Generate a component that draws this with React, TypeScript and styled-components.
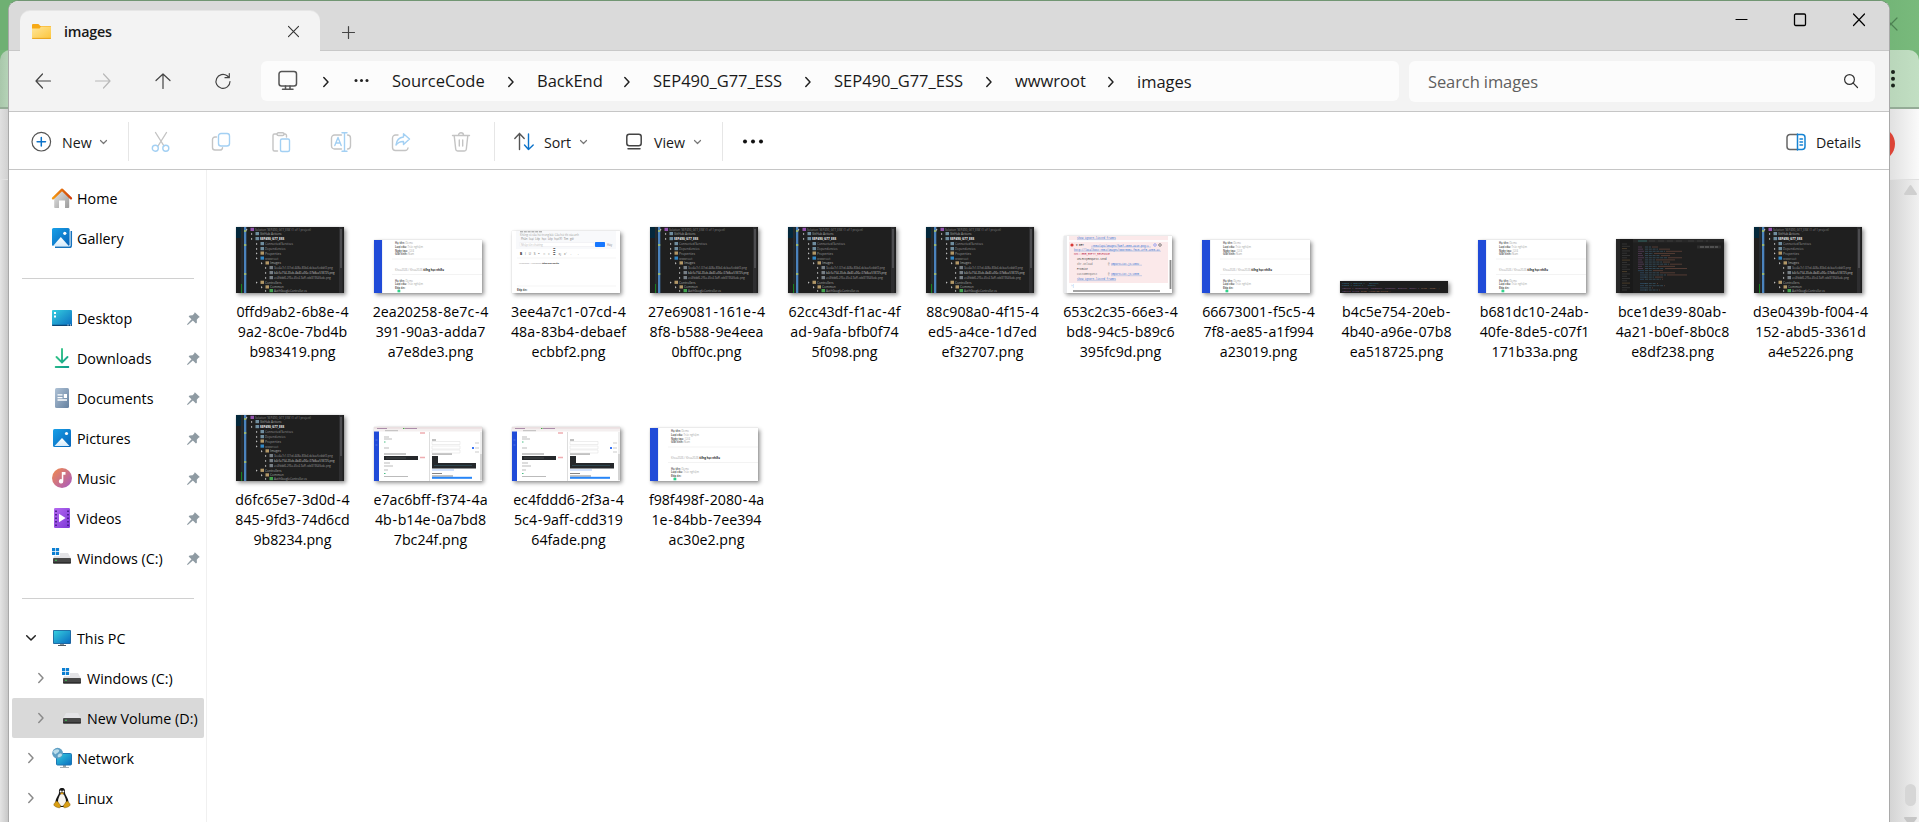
import React from "react";
import styled, { createGlobalStyle } from "styled-components";

const Global = createGlobalStyle`
  * { box-sizing: border-box; }
  html, body, #root { height: 100%; margin: 0; }
  body { overflow: hidden; font-family: "Open Sans", "Noto Sans", sans-serif; color: #191919; }
  svg { display: block; flex: none; overflow: visible; }
`;

/* ---------- browser behind the window ---------- */
const Desktop = styled.div`
  position: relative;
  height: 822px;
  display: grid;
  grid-template-rows: 50px 59px 71px 1fr;
  background: #fdfdfd;
  overflow: hidden;
`;
const TitleStrip = styled.div`
  background: linear-gradient(90deg, #6fb073 0, #6fb073 9px, #72b476 1880px, #79ba7c 100%);
  display: flex;
  justify-content: flex-end;
  padding: 17px 21px 0 0;
`;
const AddressStrip = styled.div`
  background: #72b476;
  > div {
    height: 59px;
    border-radius: 10px 10px 0 0;
    border-bottom: 2px solid #94ab96;
    background: linear-gradient(90deg, #a9c7ab 0, #b6d4b8 9px, #b9d6ba 1889px, #c2dfc3 100%);
    display: flex;
    justify-content: flex-end;
    padding: 19px 24px 0 0;
  }
`;
const BookmarkStrip = styled.div`
  border-bottom: 1px solid #e0e0e0;
  background: linear-gradient(90deg, #e0e0e0 0, #cfcfcf 9px, #e0e0e0 1889px, #fafafa 100%);
  display: flex;
  justify-content: flex-end;
  padding: 18px 24px 0 0;
`;
const Avatar = styled.div`
  width: 34px;
  height: 34px;
  border-radius: 50%;
  background: #dc4437;
`;
const PageStrip = styled.div`
  background: linear-gradient(90deg, #e4e4e4 0, #c4c4c4 9px, #d3d3d3 1889px, #f1f1f1 100%);
  display: flex;
  flex-direction: column;
  align-items: flex-end;
  justify-content: space-between;
  padding: 5px 2px 1px 0;
`;
const ScrollEnd = styled.div`
  width: 13px;
  display: flex;
  flex-direction: column;
  align-items: center;
  gap: 10px;
`;
const ScrollThumb = styled.div`
  width: 11px;
  height: 22px;
  border-radius: 6px;
  background: #d6d6d6;
`;

/* ---------- explorer window ---------- */
const Window = styled.div`
  position: absolute;
  left: 8px;
  top: 0;
  width: 1882px;
  height: 830px;
  border: 1px solid #a9a9a9;
  border-top-color: #719673;
  border-radius: 10px 10px 0 0;
  overflow: hidden;
  background: #fff;
  display: flex;
  flex-direction: column;
`;
const TitleBar = styled.div`
  height: 50px;
  background: #dadada;
  box-shadow: inset 0 -1px #c8c8c8;
  display: flex;
  align-items: flex-end;
  padding-left: 11px;
  flex: none;
`;
const Tab = styled.div`
  width: 300px;
  height: 40px;
  background: #f3f3f3;
  border-radius: 10px 10px 0 0;
  box-shadow: 0 -1px #e6e6e6;
  display: flex;
  align-items: center;
  padding: 0 21px 0 12px;
  font-size: 14.3px;
  font-weight: 600;
  letter-spacing: -0.2px;
  svg:last-child { margin-left: auto; }
  svg:first-child { margin-right: 13px; }
`;
const NewTab = styled.div`
  height: 40px;
  display: flex;
  align-items: center;
  padding: 2px 0 0 22px;
`;
const Controls = styled.div`
  margin-left: auto;
  height: 49px;
  display: flex;
  align-items: flex-start;
  padding: 10px 22px 0 0;
  gap: 43px;
`;
const NavBar = styled.div`
  height: 61px;
  flex: none;
  background: #f3f3f3;
  border-bottom: 1px solid #c6c6c6;
  display: flex;
  align-items: center;
  padding: 0 14px 0 24px;
`;
const NavButton = styled.div`
  width: 20px;
  margin-right: 40px;
  display: flex;
  justify-content: center;
`;
const AddressBox = styled.div`
  width: 1138px;
  height: 40px;
  margin-right: 10px;
  margin-left: -12px;
  border-radius: 6px;
  background: #fcfcfc;
  display: flex;
  align-items: center;
  padding-left: 17px;
  font-size: 16.5px;
`;
const Sep = styled.div<{ $w?: number }>`
  width: ${(p) => p.$w ?? 52}px;
  display: flex;
  justify-content: center;
  padding-top: 1px;
`;
const Crumb = styled.div<{ $w: number; $down?: boolean }>`
  width: ${(p) => p.$w}px;
  white-space: nowrap;
  padding-bottom: ${(p) => (p.$down ? 0 : 2)}px;
`;
const SearchBox = styled.div`
  flex: 1;
  height: 41px;
  border-radius: 6px;
  background: #fcfcfc;
  display: flex;
  align-items: center;
  justify-content: space-between;
  padding: 0 17px 0 19px;
  font-size: 16.5px;
  letter-spacing: -0.1px;
  color: #5f5f5f;
`;
const Toolbar = styled.div`
  height: 58px;
  flex: none;
  border-bottom: 1px solid #c6c6c6;
  display: flex;
  align-items: center;
  padding: 2px 28px 0 22px;
  font-size: 14.2px;
`;
const ToolIcon = styled.div<{ $w?: number; $lead?: number }>`
  width: ${(p) => p.$w ?? 60}px;
  padding-left: ${(p) => p.$lead ?? 0}px;
  display: flex;
  justify-content: center;
`;
const ToolText = styled.div<{ $w: number }>`
  width: ${(p) => p.$w}px;
  white-space: nowrap;
  padding-top: 1px;
`;
const Divider = styled.div`
  width: 1px;
  height: 39px;
  background: #e6e6e6;
`;
const Spacer = styled.div`
  flex: 1;
`;
const Body = styled.div`
  flex: 1;
  display: flex;
`;
const Sidebar = styled.div`
  width: 198px;
  border-right: 1px solid #f0f0f0;
  padding: 8px 2px 0 3px;
`;
const NavRow = styled.div<{ $child?: boolean; $selected?: boolean }>`
  height: 40px;
  border-radius: 2px;
  background: ${(p) => (p.$selected ? "#d9d9d9" : "transparent")};
  display: flex;
  align-items: center;
  padding-left: ${(p) => (p.$child ? 20 : 10)}px;
  font-size: 14.3px;
  color: #000;
`;
const Chevron = styled.div`
  width: 18px;
  display: flex;
  justify-content: center;
`;
const RowIcon = styled.div`
  width: 20px;
  margin-left: 12px;
  margin-right: 5px;
  display: flex;
  justify-content: center;
`;
const RowText = styled.div`
  white-space: nowrap;
  padding-top: 1px;
`;
const PinSlot = styled.div`
  margin-left: auto;
  padding-right: 4px;
`;
const RuleRow = styled.div`
  height: 40px;
  padding: 20px 10px 0;
  > div { height: 1px; background: #d0d0d0; }
`;
const Files = styled.div`
  flex: 1;
  display: grid;
  grid-template-columns: repeat(12, 138px);
  grid-auto-rows: 188px;
  align-content: start;
  padding: 39px 0 0 17px;
`;
const File = styled.div`
  display: flex;
  flex-direction: column;
`;
const ThumbSlot = styled.div`
  height: 84px;
  padding-left: 12px;
  display: flex;
  align-items: flex-end;
`;
const Thumb = styled.div<{ $h: number }>`
  width: 108px;
  height: ${(p) => p.$h}px;
  overflow: hidden;
  background: #fff;
  box-shadow: 2px 2px 4px rgba(0, 0, 0, 0.42), 0 0 1px rgba(0, 0, 0, 0.2);
  svg { overflow: hidden; }
`;
const Name = styled.div`
  padding-top: 9px;
  text-align: center;
  font-size: 14.2px;
  line-height: 20px;
  color: #000;
  margin-left: -1px;
`;
const NameLine = styled.div`
  white-space: nowrap;
`;
const Hyphen = styled.span`
  padding: 0 0.7px;
`;

/* ---------- icons ---------- */
type IconProps = { w: number; h?: number; vb?: string; c?: string; sw?: number; children: React.ReactNode };
const Line = ({ w, h, vb, c = "#333", sw = 1.2, children }: IconProps) => (
  <svg width={w} height={h ?? w} viewBox={vb ?? `0 0 ${w} ${h ?? w}`} fill="none" stroke={c} strokeWidth={sw} strokeLinecap="round" strokeLinejoin="round">
    {children}
  </svg>
);
const Right = ({ c = "#222", s = 1.5 }: { c?: string; s?: number }) => (
  <Line w={6} h={10} c={c} sw={s}><path d="M.8 .6 5 5 .8 9.4" /></Line>
);
const Down = () => <Line w={7} h={4} c="#777" sw={1.2}><path d="M.5 .5 3.5 3.5 6.5 .5" /></Line>;
const Cross = ({ s = 12, c = "#333", sw = 1.2 }: { s?: number; c?: string; sw?: number }) => (
  <Line w={s} vb="0 0 12 12" c={c} sw={sw}><path d="M.5 .5 11.5 11.5M11.5 .5 .5 11.5" /></Line>
);
const G = "#c4c4c4";
const B = "#a3d0f3";

const GradientSheet = styled.svg`
  position: absolute;
`;
const Defs = () => (
  <GradientSheet width="0" height="0">
    <defs>
      <linearGradient id="folder" x1="0" y1="0" x2="1" y2="1"><stop stopColor="#ffe69a" /><stop offset="1" stopColor="#fcc53a" /></linearGradient>
      <linearGradient id="blue" x1="0" y1="0" x2="1" y2="1"><stop stopColor="#18a0e8" /><stop offset="1" stopColor="#0763b8" /></linearGradient>
      <linearGradient id="cyan" x1="0" y1="0" x2="1" y2="1"><stop stopColor="#35cfdf" /><stop offset="1" stopColor="#0a6cc0" /></linearGradient>
      <linearGradient id="roof" x1="0" x2="1"><stop stopColor="#f59a12" /><stop offset="1" stopColor="#cf3f0b" /></linearGradient>
      <linearGradient id="wall" x1="0" y1="0" x2="1" y2="1"><stop stopColor="#e6e6e6" /><stop offset="1" stopColor="#9b9b9b" /></linearGradient>
      <linearGradient id="doc" x1="0" y1="0" x2="1" y2="1"><stop stopColor="#afc2d6" /><stop offset="1" stopColor="#64809f" /></linearGradient>
      <linearGradient id="music" x1="0" y1="0" x2="1" y2="1"><stop stopColor="#f38b49" /><stop offset="1" stopColor="#a659c4" /></linearGradient>
      <linearGradient id="video" x1="0" y1="0" x2="1" y2="1"><stop stopColor="#b56af0" /><stop offset="1" stopColor="#7b35d6" /></linearGradient>
      <linearGradient id="green" x1="0" y1="0" x2="1" y2="1"><stop stopColor="#3ecf86" /><stop offset="1" stopColor="#0e9c8d" /></linearGradient>
      <linearGradient id="snow" x1="0" y1="0" x2="0" y2="1"><stop stopColor="#fff" /><stop offset="1" stopColor="#d7ecfb" /></linearGradient>
    </defs>
  </GradientSheet>
);

const FolderIcon = () => (
  <svg width="19" height="15" viewBox="0 0 19 15">
    <path d="M0 1.2C0 .5.5 0 1.2 0H6c1 0 1.5 1.6 2.5 2H18c.6 0 1 .4 1 1v4H0z" fill="#f7a915" />
    <path d="M0 4.6h7.6L9 2.6h9c.6 0 1 .4 1 1V14c0 .6-.4 1-1 1H1c-.6 0-1-.4-1-1z" fill="url(#folder)" />
    <path d="M.2 14.4h18.6" stroke="#e8a31e" />
  </svg>
);
const HomeIcon = () => (
  <svg width="20" height="20">
    <path d="M2.2 9.2 9.7 2.200l7.500 7v10a.8.8 0 0 1-.8.8H13v-7.600H7V20H3a.8.8 0 0 1-.8-.8z" fill="url(#wall)" />
    <path d="M1 10.400 10 1.600l9 8.800" fill="none" stroke="url(#roof)" strokeWidth="2.300" strokeLinecap="round" strokeLinejoin="round" />
  </svg>
);
const GalleryIcon = () => (
  <svg width="20" height="20">
    <path d="M19.300 3v14.500a1.800 1.800 0 0 1-1.800 1.800H3" fill="none" stroke="#1672bd" strokeWidth="1.500" />
    <rect width="17.600" height="18" rx="1.500" fill="url(#blue)" />
    <path d="M1 18 8.800 9l8 9z" fill="url(#snow)" /><circle cx="12.800" cy="5.300" r="1.600" fill="#fff" />
  </svg>
);
const PicturesIcon = () => (
  <svg width="18" height="18">
    <rect width="18" height="18" rx="1.500" fill="url(#blue)" />
    <path d="M1.500 17 9 9l7.500 8z" fill="url(#snow)" /><circle cx="13.500" cy="4.500" r="1.600" fill="#fff" />
  </svg>
);
const DesktopIcon = () => (
  <svg width="20" height="16">
    <rect width="20" height="16" rx="1" fill="url(#cyan)" />
    <path d="M0 14.800h20V15a1 1 0 0 1-1 1H1a1 1 0 0 1-1-1z" fill="#0b4474" />
    <path d="M2 2h2v2H2zM2 5.500h2v2H2z" fill="#fff" /><path d="M15.500 15h1M18 15h1" stroke="#fff" />
  </svg>
);
const DownloadsIcon = () => (
  <svg width="16" height="20" fill="none" stroke="url(#green)" strokeWidth="1.900" strokeLinecap="round">
    <path d="M8 .9V14l.01.1M2.500 9 8 14.500 13.500 9M1.700 19h12.600l.01.01" />
  </svg>
);
const DocumentsIcon = () => (
  <svg width="14" height="20">
    <rect width="14" height="20" rx="1.500" fill="url(#doc)" />
    <path d="M2.500 6.800h5M2.500 9.600h5M2.500 12h9.500" stroke="#fff" strokeWidth="1.300" /><rect x="8.800" y="6" width="3.200" height="4" fill="#fff" />
  </svg>
);
const MusicIcon = () => (
  <svg width="20" height="20">
    <circle cx="10" cy="10" r="10" fill="url(#music)" />
    <path d="M9.800 4h3.700v2.700h-2.200v6.500a2.200 2.200 0 1 1-1.500-2z" fill="#fff" />
  </svg>
);
const VideosIcon = () => (
  <svg width="16" height="20">
    <rect width="16" height="20" rx="1.200" fill="url(#video)" />
    <path d="M2 2.500v16M14 2.500v16" stroke="#3d1680" strokeWidth="1.600" strokeDasharray="1.600 1.900" />
    <path d="M5 5.800v8.400L11.600 10z" fill="#fff" />
  </svg>
);
const DriveIcon = ({ win }: { win?: boolean }) => (
  <svg width="20" height="20">
    <path d="M4 5h12l3 5.500H1z" fill="#e3e3e6" />
    <rect x="1" y="10" width="18" height="5.500" rx="1" fill="#474747" />
    <rect x="1" y="14" width="18" height="1.500" rx=".7" fill="#2e2e2e" /><circle cx="4" cy="12.200" r=".8" fill="#42e35a" />
    {win && (<><rect x="-.500" y="-.500" width="8.500" height="8.500" fill="#fff" /><path d="M0 0h3.200v3.200H0zM3.900 0h3.200v3.200H3.900zM0 3.900h3.200v3.200H0zM3.900 3.900h3.200v3.200H3.900z" fill="#0c7fd2" /></>)}
  </svg>
);
const PcIcon = () => (
  <svg width="18" height="18">
    <path d="M7 14h4v2H7z" fill="#8b969c" /><rect y="1" width="18" height="14" rx="1" fill="#21629a" />
    <rect x=".800" y="1.800" width="16.400" height="12.400" fill="url(#cyan)" /><path d="M5 16.500h8" stroke="#505860" />
  </svg>
);
const NetworkIcon = () => (
  <svg width="20" height="20">
    <path d="M11 17h3v2h-3z" fill="#9ca5aa" /><path d="M8 19.500h9" stroke="#a6afb4" />
    <rect x="4.500" y="5.500" width="15" height="11.500" rx="1" fill="url(#cyan)" stroke="#1d76b4" />
    <circle cx="5.600" cy="5.200" r="5.400" fill="#5f9fc4" /><path d="M1 3.500C3 1 6 .500 7 2S5 5 4 6 2 5 1 3.500zM7 6c2-1 3 0 3 1S7 10 6 9 6 6.500 7 6z" fill="#b9dcea" />
  </svg>
);
const LinuxIcon = () => (
  <svg width="18" height="20">
    <path d="M9 0C6.300 0 5.800 2 6 4.500 6 6.800 2.500 10 2.500 14.500c0 3 3 4.500 6.500 4.500s6.500-1.500 6.500-4.500C15.500 10 12 6.800 12 4.500 12.200 2 11.700 0 9 0z" fill="#171717" />
    <path d="M9 6C6.800 6 6.500 8 5.500 10.500S5 18 9 18s4.500-5 3.500-7.500S11.200 6 9 6z" fill="#f7f4ee" />
    <circle cx="7.700" cy="3.500" r="1" fill="#fff" /><circle cx="10.300" cy="3.500" r="1" fill="#fff" />
    <path d="M7 5.200 9 4.200l2 1-2 1.400z" fill="#e2a116" />
    <path d="M3.500 13C2.500 14.500.5 15.500.8 17s4 2.800 5.500 2.800S8 18 6.800 16.500 4.500 13 3.500 13zM14.500 13c1 1.500 3 2.500 2.700 4s-4 2.800-5.500 2.800S10 18 11.200 16.500s2.300-3.500 3.300-3.500z" fill="#d99e14" stroke="#6c4c05" strokeWidth=".4" />
  </svg>
);
const PinIcon = () => (
  <svg width="13" height="13" viewBox="0 0 13 13">
    <path d="M7.800.2 12.800 5l-1.600 1-1.400 1.700.1 3-1 .8-3-3L1 12.700l-.9.200.2-.9L4.500 7.200 1.600 4.400l1-1 3-.1 1.500-1.500z" fill="#8f9ba3" />
  </svg>
);

/* ---------- file previews ---------- */
const treeRows: [number, number, number, string, string][] = [
  [19, 3.8, 2.9, "Solution 'SEP490_G77_ESS' (1 of 1 project)", "#858585"],
  [24, 8, 3.1, "GitHub Actions", "#a8a8a8"],
  [24, 13, 3.1, "SEP490_G77_ESS", "#f0f0f0"],
  [29, 18, 3.1, "Connected Services", "#9a9a9a"],
  [29, 23, 3.1, "Dependencies", "#929292"],
  [29, 27.5, 3.3, "Properties", "#9a9a9a"],
  [29, 32.5, 3.1, "wwwroot", "#858585"],
  [34, 37.3, 3.3, "Images", "#b0b0b0"],
  [38, 42, 2.8, "3ee4a7c1-07cd-448a-83b4-debaefecbbf2.png", "#9a9a9a"],
  [38, 47, 2.8, "b4c5e754-20eb-4b40-a96e-07b8ea518725.png", "#c8c8c8"],
  [38, 52, 2.8, "ec4fddd6-2f3a-45c4-9aff-cdd31964fade.png", "#9a9a9a"],
  [29, 56.7, 3.2, "Controllers", "#a8a8a8"],
  [34, 61.3, 3.2, "Common", "#a0a0a0"],
  [38, 65, 2.9, "AuthGoogleController.cs", "#a0a0a0"],
];
const treeIcon = (i: number) => {
  if (i === 0) return "#9352ad";
  if (i < 5) return "#6f8d9e";
  if (i === 6) return "#3186c4";
  if (i > 7 && i < 11) return "#777f85";
  return i === 13 ? "#43a24d" : "#b39867";
};
const TreePreview = () => (
  <svg width="108" height="66" fontFamily="Open Sans">
    <rect width="108" height="66" fill="#1f1f1f" />
    <rect width="8" height="11" fill="#04283b" /><rect x="5" width="2.500" height="66" fill="#252a2e" />
    <rect x="8" width="2.300" height="66" fill="#4b83bd" />
    <path d="M8 4h2.300M8 18h2.300M8 47h2.300" stroke="#b0c65f" strokeWidth="1.500" /><path d="M5.500 57v9" stroke="#178020" />
    {treeRows.map(([x, y, size, t, c], i) => (
      <g key={i}>
        <path d={`M${x - 9} ${y - 2.3}l1.600 1.200-1.600 1.200z`} fill="#bbb" />
        <rect x={x - 4.5} y={y - 3} width="3.500" height="3.200" fill={treeIcon(i)} />
        <text x={x} y={y} fontSize={size} fill={c} fontWeight={i === 2 ? 700 : 400}>{t}</text>
      </g>
    ))}
    <rect x="103" width="3.500" height="66" fill="#2e2e30" /><rect x="104" y="2" width="2" height="39" fill="#4d4d50" />
  </svg>
);
const ExamPreview = () => (
  <svg width="108" height="53" fontFamily="Open Sans" fontSize="2.700" fill="#a2a2a2">
    <rect width="108" height="53" fill="#fff" /><rect x="8" width="1" height="53" fill="#f0f2f6" /><rect width="8" height="53" fill="#204bd8" />
    <path d="M18 34.500h91M18 19h91" stroke="#eee" strokeWidth=".7" />
    <g fontSize="2.700">
      <text x="21" y="4.300"><tspan fontWeight="700" fill="#666">Họ tên:</tspan> Demo</text>
      <text x="21" y="8"><tspan fontWeight="700" fill="#666">Loại câu:</tspan> Trắc nghiệm</text>
      <text x="21" y="11.500"><tspan fontWeight="700" fill="#666">Ngày tạo:</tspan> 12/4</text>
      <text x="21" y="15"><tspan fontWeight="700" fill="#666">Giới tính:</tspan> Nam</text>
      <text x="21" y="31">Khoa2026 / Khoa2026 <tspan fontWeight="700" fill="#222">tiếng học nhiều</tspan></text>
      <text x="21" y="41.500"><tspan fontWeight="700" fill="#666">Họ tên:</tspan> Demo</text>
      <text x="21" y="45"><tspan fontWeight="700" fill="#666">Loại câu:</tspan> Trắc nghiệm</text>
      <text x="21" y="48.500"><tspan fontWeight="700" fill="#666">Đáp án:</tspan></text>
    </g>
    <rect x="23.500" y="49.800" width="2.800" height="2.500" fill="#2fd28a" />
  </svg>
);
const EditorPreview = () => (
  <svg width="108" height="62" fontFamily="Open Sans" fontSize="2.700" fill="#999">
    <rect width="108" height="62" fill="#fff" /><rect x="4" width="100" height="18" fill="#f8f9fb" />
    <path d="M8 .8h22" stroke="#999" strokeDasharray="3 .8" />
    <text x="8" y="4.800">Không có câu hỏi trong bài. Câu hỏi thi của anh</text>
    <text x="9" y="9.300" fill="#777" wordSpacing="1">Phân loại  Lớp học  Lớp học(Y)  Tìm giờ</text>
    <rect x="8" y="11.500" width="74" height="4" fill="#fff" stroke="#e5e7eb" strokeWidth=".4" /><text x="9" y="14.600" fill="#bbb">Nhập tên chương</text>
    <rect x="83" y="11" width="10" height="5" rx=".8" fill="#1677ff" /><text x="95" y="15" fill="#777">Hủy</text>
    <text x="8" y="24.300" fontSize="3.200" wordSpacing="2" fill="#666"><tspan fontWeight="700" fill="#222">B</tspan> I U S ❝ ‹› ≡ ≣ x₂ x² ← →</text>
    <path d="M5 27h99M5 55h99" stroke="#eee" strokeWidth=".6" />
    <text x="7" y="32.500" fontSize="2.200">Khoa2026 / Khoa2026 <tspan fontWeight="700" fill="#222">tiếng học nhiều</tspan></text>
    <text x="5" y="59.500" fontWeight="700" fill="#555">Đáp án:</text>
  </svg>
);
const ErrorPreview = () => (
  <svg width="108" height="57" fontFamily="Liberation Mono" fontSize="2.600" fill="#777">
    <rect width="108" height="57" fill="#fff" /><rect width="3" height="57" fill="#e9eaec" /><rect x="5" width="99" height="47" fill="#fbe9ea" />
    <path d="M5 5h99" stroke="#fff" strokeWidth="1.500" />
    <g fill="#3472d5">
      <text x="13" y="3">Show ignore-listed frames</text>
      <text x="27" y="10.500">:7052/api/images/f98f-2080-4a1e.png:1</text>
      <text x="10" y="14.500">http://localhost:7052/images/66673001-f5c5-47f8-ae85-a1</text>
      <text x="47" y="28.500">ImportList.js:2082</text>
      <text x="47" y="39">ImportList.js:2085</text>
      <text x="13" y="44">Show ignore-listed frames</text>
    </g>
    <path d="M13 3.600h39M27 11h60M10 15.200h87M47 29.200h31M47 39.700h31M13 44.600h39" stroke="#7ea2df" strokeWidth=".4" />
    <circle cx="8" cy="9" r="1.600" fill="#d83a36" /><text x="12" y="10.300" fill="#222">▼ GET</text>
    <circle cx="91" cy="9" r="1.300" fill="none" stroke="#7d8df0" strokeWidth=".7" /><circle cx="96" cy="9" r="1.300" fill="none" stroke="#555" strokeWidth=".7" />
    <text x="10" y="18.500" fill="#b35">net::ERR_EMPTY_RESPONSE</text><text x="13" y="23.500" fill="#444">XMLHttpRequest.send</text>
    <text x="13" y="28.500">xhr.onload</text><text x="13" y="33.500" fill="#444">Promise</text><text x="13" y="39">customRequest</text>
    <text x="44" y="28.500">@</text><text x="44" y="39">@</text><text x="7" y="50.500" fill="#3472d5">›|</text>
    <path d="M106.500 24v29" stroke="#8a8a8a" strokeWidth="1.800" /><path d="M9 55h87" stroke="#858585" strokeWidth="1.500" />
  </svg>
);
const SnippetPreview = () => (
  <svg width="108" height="12" fontFamily="Liberation Mono" fontSize="2.400">
    <rect width="108" height="12" fill="#1e1e1e" />
    <text x="2" y="2.500" fill="#36809e">const {"{ Option }"} = Select;</text><text x="2" y="5.200" fill="#36809e">const {"{ Title }"} = Table;</text>
    <text x="2" y="8" fill="#8d5e91">import {"{ useEffect, useState, useMemo, Button, Modal }"} <tspan fill="#a4745b">from 'antd' ;</tspan></text>
    <text x="2" y="10.900" fill="#8d5e91">import axios <tspan fill="#a4745b">from 'routing/axios';</tspan></text>
  </svg>
);
const CodePreview = () => (
  <svg width="108" height="54">
    <rect width="108" height="54" fill="#1f1f1f" /><rect width="4" height="54" fill="#272727" /><rect x="4" width="13" height="54" fill="#1a1a1a" /><rect x="17" width="91" height="3.500" fill="#272727" />
    <path d="M22 2h9" stroke="#3a9390" strokeWidth=".6" /><path d="M33 2h35M72 2h20" stroke="#4b4b4b" strokeWidth=".6" strokeDasharray="6 3" />
    <rect x="81" y="6.500" width="24" height="3" fill="#2f2f2f" /><path d="M84 8h18" stroke="#8c8c8c" strokeWidth=".7" strokeDasharray="4 1" />
    {Array.from({ length: 21 }, (_, i) => (
      <g key={i} strokeWidth=".7">
        <path d={`M6 ${5 + i * 2.3}h${5 + (i * 3) % 6}`} stroke={i % 5 === 2 ? "#6b5537" : "#444"} strokeWidth=".6" />
        {i !== 16 && (
          <>
            <path d={`M${22 + (i > 11 ? 2 : 0)} ${8 + i * 2.15}h${4 + (i % 3)}`} stroke={i < 11 ? "#5e4163" : "#31536f"} />
            <path d={`M29 ${8 + i * 2.15}h${6 + (i * 7) % 19}`} stroke="#39596a" strokeDasharray="3 .8" />
            <path d={`M${36 + (i * 7) % 19} ${8 + i * 2.15}h${i < 15 ? 6 + (i * 5) % 17 : 1}`} stroke="#6b493d" />
          </>
        )}
      </g>
    ))}
  </svg>
);
const AdminPreview = () => (
  <svg width="108" height="54">
    <rect width="108" height="54" fill="#fff" /><rect width="108" height="4.500" fill="#f4efef" /><rect width="108" height="1.800" fill="#ebe0e1" />
    <path d="M3 1.500h10M31 1.500h12" stroke="#979" strokeWidth=".8" /><path d="M29 1.500h1.500" stroke="#4a4" /><path d="M11 3.700h13" stroke="#999" strokeWidth=".6" />
    <rect y="4.500" width="5" height="50" fill="#204bd8" /><path d="M1.500 13h2M1.500 18h2" stroke="#7290ee" strokeWidth=".6" />
    <path d="M55.500 5v49M107 5v49" stroke="#ddd" />
    <path d="M10 10h5M10 12h8M10 21h5M10 36h6M10 39h9M10 43h4M10 49.500h24" stroke="#aaa" strokeWidth=".8" />
    <path d="M10 27h22" stroke="#777" strokeWidth=".8" /><path d="M46 6h5M46 30.500h5" stroke="#eeadb1" strokeWidth="1.500" />
    <rect x="10" y="29" width="34" height="4" fill="#25282b" /><path d="M12 31h20" stroke="#666" strokeWidth=".5" />
    <path d="M10 15h1.500M10 46.500h1.500" stroke="#46bd82" />
    <path d="M58 13h4M58 27h20M58 46.500h10M58 49h21" stroke="#666" strokeWidth=".8" />
    <path d="M58 14.500h28v3H58zM58 19h28v3H58zM58 23h28v3H58z" fill="#fff" stroke="#ddd" strokeWidth=".5" />
    <rect x="98" y="20" width="2" height="2" fill="#3975f6" /><path d="M101 16h4M101 21h4M101 25h4" stroke="#aaa" strokeWidth=".6" />
    <rect x="58" y="29" width="6" height="7" fill="#25282b" /><rect x="58" y="36" width="44" height="5.500" fill="#25282b" /><path d="M60 38.500h38" stroke="#386575" strokeWidth=".5" />
    <path d="M58 43h22" stroke="#83a9ef" strokeWidth=".7" /><rect x="58" y="49.800" width="40" height="2" fill="#2785f7" /><path d="M107 27v26" stroke="#bbb" />
  </svg>
);

const previews = {
  tree: [66, TreePreview], exam: [53, ExamPreview], editor: [62, EditorPreview], error: [57, ErrorPreview],
  snippet: [12, SnippetPreview], code: [54, CodePreview], admin: [54, AdminPreview],
} as const;

const files: [keyof typeof previews, string, string, string][] = [
  ["tree", "0ffd9ab2-6b8e-4", "9a2-8c0e-7bd4b", "b983419.png"],
  ["exam", "2ea20258-8e7c-4", "391-90a3-adda7", "a7e8de3.png"],
  ["editor", "3ee4a7c1-07cd-4", "48a-83b4-debaef", "ecbbf2.png"],
  ["tree", "27e69081-161e-4", "8f8-b588-9e4eea", "0bff0c.png"],
  ["tree", "62cc43df-f1ac-4f", "ad-9afa-bfb0f74", "5f098.png"],
  ["tree", "88c908a0-4f15-4", "ed5-a4ce-1d7ed", "ef32707.png"],
  ["error", "653c2c35-66e3-4", "bd8-94c5-b89c6", "395fc9d.png"],
  ["exam", "66673001-f5c5-4", "7f8-ae85-a1f994", "a23019.png"],
  ["snippet", "b4c5e754-20eb-", "4b40-a96e-07b8", "ea518725.png"],
  ["exam", "b681dc10-24ab-", "40fe-8de5-c07f1", "171b33a.png"],
  ["code", "bce1de39-80ab-", "4a21-b0ef-8b0c8", "e8df238.png"],
  ["tree", "d3e0439b-f004-4", "152-abd5-3361d", "a4e5226.png"],
  ["tree", "d6fc65e7-3d0d-4", "845-9fd3-74d6cd", "9b8234.png"],
  ["admin", "e7ac6bff-f374-4a", "4b-b14e-0a7bd8", "7bc24f.png"],
  ["admin", "ec4fddd6-2f3a-4", "5c4-9aff-cdd319", "64fade.png"],
  ["exam", "f98f498f-2080-4a", "1e-84bb-7ee394", "ac30e2.png"],
];

type Place = { label: string; icon: React.ReactNode; pin?: boolean; open?: boolean; closed?: boolean; child?: boolean; selected?: boolean };
const places: (Place | null)[] = [
  { label: "Home", icon: <HomeIcon /> },
  { label: "Gallery", icon: <GalleryIcon /> },
  null,
  { label: "Desktop", icon: <DesktopIcon />, pin: true },
  { label: "Downloads", icon: <DownloadsIcon />, pin: true },
  { label: "Documents", icon: <DocumentsIcon />, pin: true },
  { label: "Pictures", icon: <PicturesIcon />, pin: true },
  { label: "Music", icon: <MusicIcon />, pin: true },
  { label: "Videos", icon: <VideosIcon />, pin: true },
  { label: "Windows (C:)", icon: <DriveIcon win />, pin: true },
  null,
  { label: "This PC", icon: <PcIcon />, open: true },
  { label: "Windows (C:)", icon: <DriveIcon win />, closed: true, child: true },
  { label: "New Volume (D:)", icon: <DriveIcon />, closed: true, child: true, selected: true },
  { label: "Network", icon: <NetworkIcon />, closed: true },
  { label: "Linux", icon: <LinuxIcon />, closed: true },
];

const crumbs: [string, number][] = [
  ["SourceCode", 93], ["BackEnd", 64], ["SEP490_G77_ESS", 129], ["SEP490_G77_ESS", 129], ["wwwroot", 70], ["images", 56],
];

const FileName = ({ text }: { text: string }) => (
  <NameLine>
    {text.split("-").map((part, i) => (
      <React.Fragment key={i}>{i > 0 && <Hyphen>-</Hyphen>}{part}</React.Fragment>
    ))}
  </NameLine>
);

export default function App() {
  return (
    <Desktop>
      <Global />
      <Defs />
      <TitleStrip><Line w={14} c="#4d8052"><path d="M1 1 13 13M13 1 1 13" /></Line></TitleStrip>
      <AddressStrip><div>
        <svg width="4" height="20" fill="#1b241c"><circle cx="2" cy="3" r="2" /><circle cx="2" cy="9.700" r="2" /><circle cx="2" cy="16.400" r="2" /></svg>
      </div></AddressStrip>
      <BookmarkStrip><Avatar /></BookmarkStrip>
      <PageStrip>
        <ScrollEnd><svg width="13" height="10"><path d="M6.500 1 12 9H1z" fill="#cfcfcf" stroke="#cfcfcf" strokeWidth="2" strokeLinejoin="round" /></svg></ScrollEnd>
        <ScrollEnd><ScrollThumb /><svg width="13" height="5"><path d="M1 2h11L6.500 9z" fill="#c6c6c6" stroke="#c6c6c6" strokeWidth="2" strokeLinejoin="round" /></svg></ScrollEnd>
      </PageStrip>

      <Window>
        <TitleBar>
          <Tab><FolderIcon />images<Cross s={11} /></Tab>
          <NewTab><Line w={13} c="#444"><path d="M6.500 .5v12M.5 6.500h12" /></Line></NewTab>
          <Controls>
            <Line w={16} c="#000"><path d="M3 7.500h11" /></Line>
            <Line w={16} c="#000" sw={1.300}><rect x="2.500" y="2" width="11" height="11.500" rx="1.200" /></Line>
            <Line w={16} c="#000"><path d="M2.500 2l11 11.500M13.500 2l-11 11.500" /></Line>
          </Controls>
        </TitleBar>

        <NavBar>
          <NavButton><Line w={16} c="#444"><path d="M15.500 8H1M7.500 1 1 8l6.500 7" /></Line></NavButton>
          <NavButton><Line w={16} c="#b8b8b8"><path d="M.5 8H15M8.500 1 15 8l-6.500 7" /></Line></NavButton>
          <NavButton><Line w={16} c="#444"><path d="M8 15.500V1M1 7.500 8 1l7 6.500" /></Line></NavButton>
          <NavButton><Line w={16} c="#444"><path d="M15 8.500a7 7 0 1 1-2.800-5.700l1.800 1.700M14.300.5v4.200H10" /></Line></NavButton>
          <AddressBox>
            <Line w={20} c="#555" sw={1.500}><rect x="1" y=".5" width="17.500" height="14.500" rx="2.500" /><path d="M7.500 15v3M12 15v3M4.500 18.300h10.500" /></Line>
            <Sep $w={56}><Right /></Sep>
            <svg width="16" height="4" fill="#222"><circle cx="2" cy="1.500" r="1.500" /><circle cx="7.500" cy="1.500" r="1.500" /><circle cx="13" cy="1.500" r="1.500" /></svg>
            <Sep $w={22} />
            {crumbs.map(([t, w], i) => (
              <React.Fragment key={i}>
                {i > 0 && <Sep><Right /></Sep>}
                <Crumb $w={w} $down={i === 5}>{t}</Crumb>
              </React.Fragment>
            ))}
          </AddressBox>
          <SearchBox>Search images
            <Line w={14} c="#333"><circle cx="5.500" cy="5.500" r="4.900" /><path d="M9.200 9.200 13.500 13.500" /></Line>
          </SearchBox>
        </NavBar>

        <Toolbar>
          <ToolIcon $w={20}><Line w={20} c="#555"><circle cx="10.300" cy="9.700" r="9.300" /><path d="M10.300 5.500v8.400M6.100 9.700h8.400" stroke="#0b72c9" strokeWidth="1.500" /></Line></ToolIcon>
          <Sep $w={11} />
          <ToolText $w={30}>New</ToolText>
          <Sep $w={22}><Down /></Sep>
          <Sep $w={14} />
          <Divider />
          <Sep $w={2} />
          <ToolIcon>
            <Line w={20} c={G} sw={1.400}><path d="M4.500 .5l8.500 13.500M15.500 .5L7 14" /><g stroke={B}><circle cx="4.300" cy="16.200" r="3" /><circle cx="14.800" cy="16.200" r="3" /></g></Line>
          </ToolIcon>
          <ToolIcon><Line w={20} c={G} sw={1.400}><path d="M5.500 5H4a2.500 2.500 0 0 0-2.500 2.500v8A2.500 2.500 0 0 0 4 18h5a2.500 2.500 0 0 0 2.500-2.200" /><rect x="7.500" y="1.500" width="11" height="12.500" rx="2.500" stroke={B} /></Line></ToolIcon>
          <ToolIcon><Line w={20} c={G} sw={1.400}><path d="M6 2H3.500A1.500 1.500 0 0 0 2 3.500v14A1.500 1.500 0 0 0 3.500 19h3M13 2h1a1.500 1.500 0 0 1 1.500 1.500V5" /><rect x="6" y=".8" width="7" height="2.700" rx="1.300" /><rect x="9.500" y="7" width="9" height="12.500" rx="1.500" stroke={B} /></Line></ToolIcon>
          <ToolIcon><Line w={20} c={G} sw={1.400}><path d="M10.500 3H3.500A3 3 0 0 0 .5 6v8a3 3 0 0 0 3 3h7M16.500 3a3 3 0 0 1 3 3v8a3 3 0 0 1-3 3" /><path d="M11 .8h5M13.500 .8v18.500M11 19.300h5M3.800 13.500 7 5.500l3.200 8M5 11h4" stroke={B} /></Line></ToolIcon>
          <ToolIcon><Line w={20} c={G} sw={1.400}><path d="M7 3H4.500a3 3 0 0 0-3 3v9.500a3 3 0 0 0 3 3H14a3 3 0 0 0 3-2.500" /><path d="M12.500 1.800 18.500 7l-6 5.500V9.500C9 9.300 7 10.500 5 13c.5-4.500 3-7.500 7.500-8z" stroke={B} /></Line></ToolIcon>
          <ToolIcon><Line w={20} c={G} sw={1.400}><path d="M1.500 3.500h17M7.500 3.200a2.500 2.500 0 0 1 5 0M3.200 3.700l1.500 13.500a2 2 0 0 0 2 1.800h6.600a2 2 0 0 0 2-1.800l1.500-13.500M8.300 8v6M11.700 8v6" /></Line></ToolIcon>
          <Sep $w={3} />
          <Divider />
          <ToolIcon $w={49} $lead={9}><Line w={20} c="#555" sw={1.400}><path d="M5.500 17.500V1.500M.8 6.500l4.700-5 4.700 5" /><path d="M14.500 2v15.500M10.500 13l4 4.500 4.700-4.500" stroke="#0b72c9" /></Line></ToolIcon>
          <ToolText $w={28}>Sort</ToolText>
          <Sep $w={22}><Down /></Sep>
          <ToolIcon $lead={20}><Line w={16} c="#444" sw={1.500}><rect x=".8" y=".3" width="14.400" height="11.400" rx="2.500" /><path d="M2 14.700h12" /></Line></ToolIcon>
          <ToolText $w={32}>View</ToolText>
          <Sep $w={22}><Down /></Sep>
          <Sep $w={14} />
          <Divider />
          <ToolIcon><svg width="22" height="5" fill="#111"><circle cx="3" cy="2.500" r="2" /><circle cx="11" cy="2.500" r="2" /><circle cx="19" cy="2.500" r="2" /></svg></ToolIcon>
          <Spacer />
          <Line w={20} h={18} c="#666" sw={1.500}><path d="M11.500 1.500H4A3 3 0 0 0 1 4.500v9a3 3 0 0 0 3 3h7.500" /><path d="M11.500 1v16M11.500 1.500H16a3 3 0 0 1 3 3v9a3 3 0 0 1-3 3h-4.500M14 6h2.500M14 9h2.500M14 12h2.500" stroke="#1583d3" /></Line>
          <Sep $w={10} />
          <ToolText $w={45}>Details</ToolText>
        </Toolbar>

        <Body>
          <Sidebar>
            {places.map((p, i) => p === null ? <RuleRow key={i}><div /></RuleRow> : (
              <NavRow key={i} $child={p.child} $selected={p.selected}>
                <Chevron>
                  {p.closed && <Right c="#8a8a8a" />}
                  {p.open && <Line w={10} h={6} c="#222" sw={1.500}><path d="M.7 .8 5 5 9.300 .8" /></Line>}
                </Chevron>
                <RowIcon>{p.icon}</RowIcon>
                <RowText>{p.label}</RowText>
                {p.pin && <PinSlot><PinIcon /></PinSlot>}
              </NavRow>
            ))}
          </Sidebar>
          <Files>
            {files.map(([kind, ...lines]) => {
              const [h, Preview] = previews[kind];
              return (
                <File key={lines[0]}>
                  <ThumbSlot><Thumb $h={h}><Preview /></Thumb></ThumbSlot>
                  <Name>{lines.map((l) => <FileName key={l} text={l} />)}</Name>
                </File>
              );
            })}
          </Files>
        </Body>
      </Window>
    </Desktop>
  );
}
